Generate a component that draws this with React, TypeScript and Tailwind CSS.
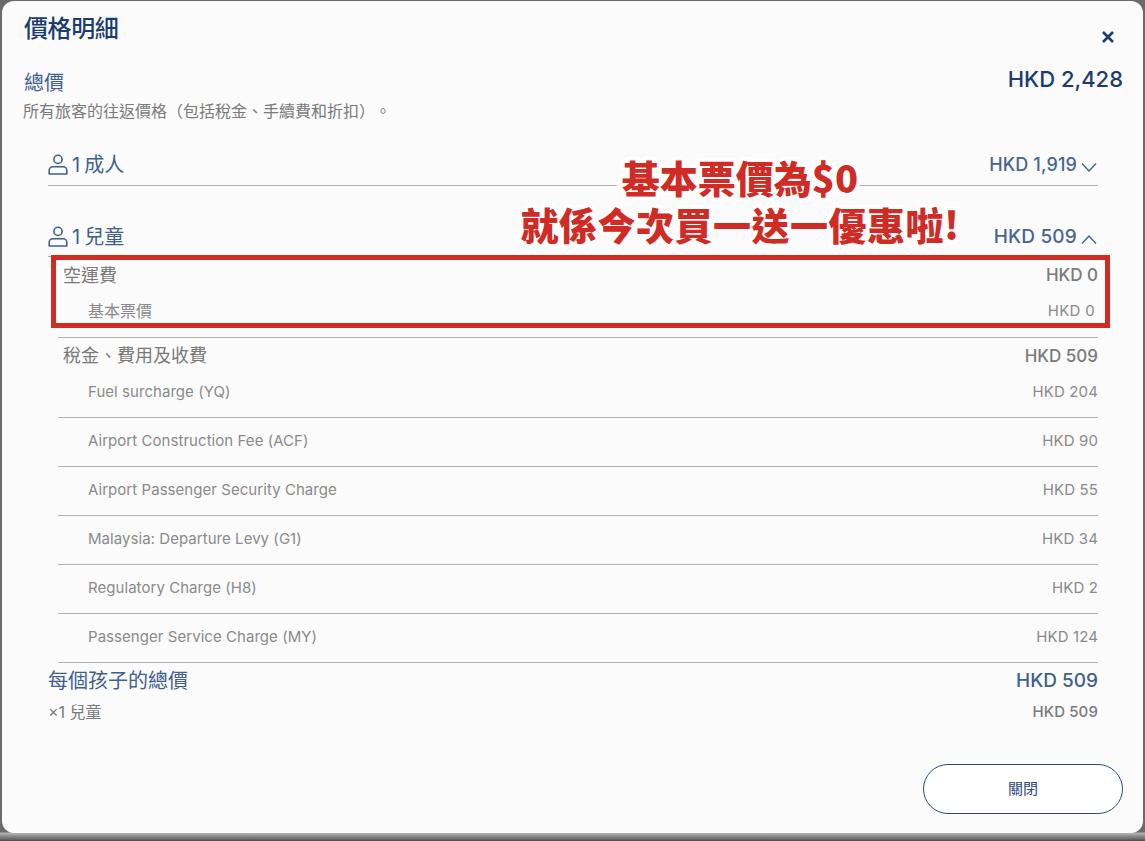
import React from "react";

const latin = "font-['Inter','Noto_Sans_CJK_TC',sans-serif]";

const fees = [
  { name: "Fuel surcharge (YQ)", amount: "HKD 204" },
  { name: "Airport Construction Fee (ACF)", amount: "HKD 90" },
  { name: "Airport Passenger Security Charge", amount: "HKD 55" },
  { name: "Malaysia: Departure Levy (G1)", amount: "HKD 34" },
  { name: "Regulatory Charge (H8)", amount: "HKD 2" },
  { name: "Passenger Service Charge (MY)", amount: "HKD 124" },
];

function PersonIcon() {
  return (
    <svg width="20" height="21" viewBox="0 0 20 21" fill="none" stroke="#3f5f8d" strokeWidth="1.6" className="mr-[4px] mt-[-2px]">
      <circle cx="10" cy="5.4" r="4.1" />
      <path d="M1.2 20v-3.6c0-2 1.6-3.6 3.6-3.6h10.4c2 0 3.6 1.6 3.6 3.6V20z" strokeLinejoin="round" />
    </svg>
  );
}

function Chevron({ up }: { up?: boolean }) {
  return (
    <svg width="16" height="9" viewBox="0 0 16 9" fill="none" stroke="#3f5f8d" strokeWidth="1.3" className="ml-[4px] mt-[5px]">
      <path d={up ? "M1 8.5L8 1l7 7.5" : "M1 .5L8 8l7-7.5"} />
    </svg>
  );
}

function PassengerHeader({ count, label, amount, up, height, pad, amountSize }: { count: string; label: string; amount: string; up?: boolean; height: string; pad: string; amountSize: string }) {
  return (
    <div className={`flex items-end justify-between border-b border-[#b0b0b0] ${pad} ${height}`}>
      <div className="flex items-center text-[20px] leading-[28px] text-[#3f5f8d]">
        <PersonIcon />
        <span>{count}</span>
        <span className="ml-[4px]">{label}</span>
      </div>
      <div className={`flex items-center pr-[1px] font-medium leading-[28px] text-[#48658f] ${amountSize}`}>
        <span>{amount}</span>
        <Chevron up={up} />
      </div>
    </div>
  );
}

export default function App() {
  return (
    <div className={`relative flex h-[841px] w-full flex-col overflow-hidden bg-[linear-gradient(to_bottom,#6a6a6a_0,#6a6a6a_832px,#b5b5b5_833px,#4f4f4f_841px)] pl-[2px] pr-[2px] pt-[1px] pb-[8px] ${latin}`}>
      <div className="flex flex-1 flex-col rounded-[12px] bg-[#fbfbfb] pl-[22px] pr-[20px] pb-[19px]">
        <div className="flex h-[56px] items-center justify-between">
          <h1 className="text-[24px] font-medium leading-[32px] tracking-[-0.4px] text-[#1b3c70]">價格明細</h1>
          <button className="mr-[8px] mt-[16px] text-[#1b3c70]">
            <svg width="14" height="14" viewBox="0 0 14 14" fill="none" stroke="currentColor" strokeWidth="2.6">
              <path d="M2 2l10 10M12 2L2 12" />
            </svg>
          </button>
        </div>

        <div className="mt-[12px] flex items-start justify-between">
          <div>
            <div className="text-[20px] leading-[28px] text-[#3f5f8d]">總價</div>
            <div className="ml-[-1px] mt-[2px] text-[16px] leading-[24px] text-[#7a7a7a] [text-spacing-trim:space-all]">
              所有旅客的往返價格（包括稅金、手續費和折扣）。
            </div>
          </div>
          <div className="mt-[-5px] text-[22px] font-medium leading-[30px] text-[#1b3c70]">HKD 2,428</div>
        </div>

        <div className="ml-[24px] mr-[25px]">
          <PassengerHeader count="1" label="成人" amount="HKD 1,919" height="h-[63px]" pad="pb-[6px]" amountSize="text-[18px] tracking-[0.15px]" />
          <PassengerHeader count="1" label="兒童" amount="HKD 509" up height="h-[71px]" pad="pb-[5px]" amountSize="text-[19px] tracking-[0.2px]" />

          <div className="ml-[10px]">
            <div className="border-b border-[#b0b0b0] pb-[8px]">
              <div className="flex h-[36px] items-center justify-between pl-[5px] pt-[2px] text-[#7a7a7a]">
                <span className="text-[18px] leading-[28px]">空運費</span>
                <span className="text-[17px] font-medium">HKD 0</span>
              </div>
              <div className="flex h-[36px] items-center justify-between pl-[30px] text-[#8a8a8a]">
                <span className="text-[16px] leading-[24px]">基本票價</span>
                <span className="pr-[3px] text-[15px] tracking-[0.3px]">HKD 0</span>
              </div>
            </div>

            <div className="flex h-[31px] items-start justify-between pl-[5px] pt-[4px] text-[#7a7a7a]">
              <span className="text-[18px] leading-[28px]">稅金、費用及收費</span>
              <span className="text-[17px] font-medium leading-[28px]">HKD 509</span>
            </div>

            {fees.map((fee) => (
              <div key={fee.name} className="flex h-[49px] items-start justify-between border-b border-[#b0b0b0] pl-[30px] pt-[11px] text-[15px] leading-[24px] text-[#8a8a8a]">
                <span className="tracking-[0.05px]">{fee.name}</span>
                <span className="tracking-[0.12px]">{fee.amount}</span>
              </div>
            ))}
          </div>

          <div className="mt-[4px] flex items-center justify-between text-[#3f5f8d]">
            <span className="text-[20px] leading-[28px]">每個孩子的總價</span>
            <span className="text-[19px] font-medium leading-[28px]">HKD 509</span>
          </div>
          <div className="mt-[5px] flex items-center justify-between text-[16px] leading-[24px] text-[#7a7a7a]">
            <span>×1 兒童</span>
            <span className="text-[15px] font-medium tracking-[0.12px]">HKD 509</span>
          </div>
        </div>

        <div className="mt-auto flex justify-end">
          <button className="h-[50px] w-[200px] rounded-full border border-[#2a4a7f] bg-white text-[15px] text-[#2a4a7f]">
            關閉
          </button>
        </div>
      </div>

      {/* red callout drawn over the screenshot */}
      <div className="absolute left-[51px] top-[255px] h-[73px] w-[1059px] border-[5px] border-[#d02b25]" />
      <div className="absolute left-[440px] top-[153px] w-[600px] text-center font-['Noto_Sans_CJK_TC',sans-serif] text-[38px] font-black leading-[47px] text-[#d02b25] [-webkit-text-stroke:7px_white] [paint-order:stroke_fill]">
        <div>基本票價為$0</div>
        <div className="tracking-[0.5px]">就係今次買一送一優惠啦!</div>
      </div>
    </div>
  );
}
